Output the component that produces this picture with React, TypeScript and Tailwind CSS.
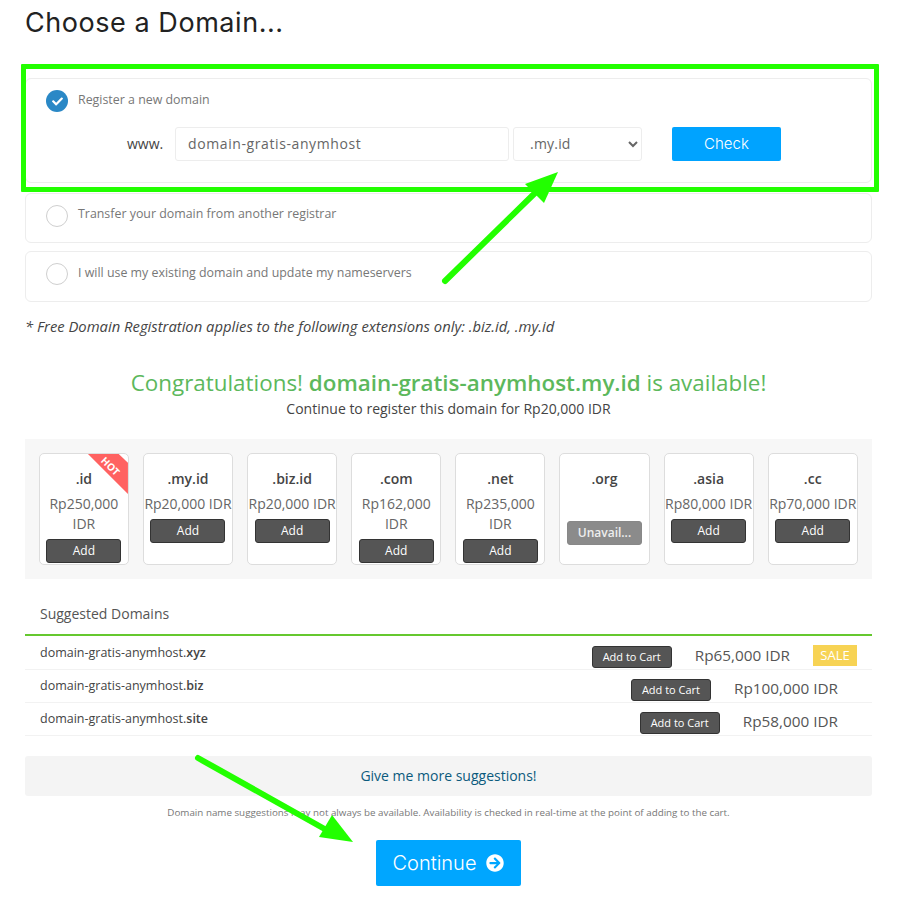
import { FaArrowCircleRight, FaCheck } from "react-icons/fa";

const tlds = [
  { t: ".id", p: "Rp250,000 IDR", hot: true },
  { t: ".my.id", p: "Rp20,000 IDR" },
  { t: ".biz.id", p: "Rp20,000 IDR" },
  { t: ".com", p: "Rp162,000 IDR" },
  { t: ".net", p: "Rp235,000 IDR" },
  { t: ".org", p: "" },
  { t: ".asia", p: "Rp80,000 IDR" },
  { t: ".cc", p: "Rp70,000 IDR" },
];

const suggestions = [
  { n: "xyz", p: "Rp65,000 IDR", sale: true },
  { n: "biz", p: "Rp100,000 IDR" },
  { n: "site", p: "Rp58,000 IDR" },
];

function Radio({ checked }: { checked?: boolean }) {
  return checked ? (
    <span className="flex h-[22px] w-[22px] shrink-0 items-center justify-center rounded-full bg-[#2a88c6] text-white">
      <FaCheck className="h-[11px] w-[11px]" />
    </span>
  ) : (
    <span className="h-[22px] w-[22px] shrink-0 rounded-full border border-[#cfcfcf] bg-white" />
  );
}

export default function App() {
  return (
    <div className="relative h-[897px] w-[906px] overflow-hidden bg-white pr-[34px] pl-[25px] font-['Open_Sans',sans-serif] text-[14px] text-[#555]">
      <h1 className="h-[46px] font-['Inter',sans-serif] text-[27px] leading-[46px] font-normal tracking-[0.55px] text-[#222]">
        Choose a Domain...
      </h1>

      <div className="mt-[32px] h-[105px] rounded-[6px] border border-[#ededed] pt-[11px] pl-[20px]">
        <div className="flex items-center gap-[10px]">
          <Radio checked />
          <span className="-mt-[2px] text-[12.4px] leading-[20px] text-[#777]">Register a new domain</span>
        </div>
        <div className="mt-[15px] flex items-center">
          <span className="-mt-[2px] ml-[81px] w-[48px] text-[14px] text-[#444]">www.</span>
          <input
            readOnly
            value="domain-gratis-anymhost"
            className="h-[34px] w-[334px] rounded-[3px] border border-[#ededed] pr-[13px] pb-[2px] pl-[12px] text-[14px] tracking-[0.6px] text-[#666] outline-none"
          />
          <select className="ml-[4px] h-[34px] w-[129px] rounded-[3px] border border-[#ededed] bg-white pb-[2px] pl-[12px] text-[14px] tracking-[0.2px] text-[#666] outline-none">
            <option>.my.id</option>
          </select>
          <button className="ml-[30px] h-[34px] w-[109px] rounded-[2px] bg-[#00a3ff] font-['Inter',sans-serif] text-[15px] font-light text-white">
            Check
          </button>
        </div>
      </div>

      <div className="mt-[10px] flex h-[50px] items-start gap-[10px] rounded-[6px] border border-[#ededed] pt-[11px] pl-[20px]">
        <Radio />
        <span className="-mt-[1px] text-[12.4px] leading-[20px] text-[#777]">Transfer your domain from another registrar</span>
      </div>
      <div className="mt-[8px] flex h-[51px] items-start gap-[10px] rounded-[6px] border border-[#ededed] pt-[11px] pl-[20px]">
        <Radio />
        <span className="text-[12.4px] leading-[20px] text-[#777]">I will use my existing domain and update my nameservers</span>
      </div>

      <p className="mt-[14px] h-[20px] text-[14.8px] leading-[20px] text-[#444] italic">
        * Free Domain Registration applies to the following extensions only: .biz.id, .my.id
      </p>

      <p className="mt-[31px] text-center text-[22.4px] leading-[32px] text-[#5cb85c]">
        Congratulations! <b className="font-semibold">domain-gratis-anymhost.my.id</b> is available!
      </p>
      <p className="text-center text-[14px] leading-[20px] text-[#444]">
        Continue to register this domain for Rp20,000 IDR
      </p>

      <div className="mt-[20px] grid h-[140px] grid-cols-8 gap-[14px] bg-[#f7f7f7] py-[14px] pr-[14.2px] pl-[13.8px]">
        {tlds.map((d) => (
          <div
            key={d.t}
            className="relative flex h-[112px] min-w-0 flex-col items-center overflow-hidden rounded-[5px] border border-[#ddd] bg-white pt-[15px] text-center"
          >
            {d.hot && (
              <span className="absolute top-0 right-0 h-[40px] w-[40px] bg-[#ff6261] [clip-path:polygon(0_0,77%_0,100%_22%,100%_100%)]">
                <span className="absolute top-[6px] left-[12px] rotate-45 text-[10px] leading-[12px] font-bold text-white">HOT</span>
              </span>
            )}
            <span className="text-[14px] leading-[20px] font-semibold text-[#444]">{d.t}</span>
            {d.p ? (
              <span className="mt-[5px] text-[14px] leading-[20px] text-[#666]">{d.p}</span>
            ) : (
              <span className="h-[27px]" />
            )}
            <button
              className={
                d.p
                  ? "mt-[5px] h-[24px] w-[75px] shrink-0 rounded-[3px] border border-[#333] bg-[#555] text-[12px] leading-[20px] text-white"
                  : "mt-[5px] h-[24px] w-[75px] shrink-0 rounded-[3px] border border-[#888] bg-[#8b8b8b] text-[12px] leading-[20px] font-semibold text-[#eee]"
              }
            >
              {d.p ? "Add" : "Unavail..."}
            </button>
          </div>
        ))}
      </div>

      <div className="mt-[25px] h-[30px] px-[15px] text-[14px] leading-[20px] text-[#555]">Suggested Domains</div>
      <div className="border-t-2 border-[#65c82f] pt-[1px]">
        {suggestions.map((s) => (
          <div key={s.n} className="flex h-[33px] border-b border-[#f2f2f2] pl-[15px]">
            <span className="mt-[6px] text-[12.5px] leading-[20px] text-[#444]">
              domain-gratis-anymhost.<b className="font-semibold">{s.n}</b>
            </span>
            <div className={s.sale ? "ml-auto flex items-start pr-[15px]" : "ml-auto flex items-start pr-[34px]"}>
              <button className="mt-[9px] h-[22px] w-[80px] rounded-[3px] border border-[#333] bg-[#555] text-[11px] leading-[20px] text-white">
                Add to Cart
              </button>
              <span className="mt-[8px] ml-[23px] text-[15.3px] leading-[20px] text-[#555]">{s.p}</span>
              {s.sale && (
                <span className="mt-[8px] ml-[23px] flex h-[21px] w-[44px] items-center justify-center bg-[#f7d354] text-[13px] text-white">SALE</span>
              )}
            </div>
          </div>
        ))}
      </div>

      <div className="mt-[20px] flex h-[40px] items-center justify-center rounded-[3px] bg-[#f4f4f4] pb-[2px] text-[14px] text-[#0b5a7d]">
        Give me more suggestions!
      </div>
      <p className="mt-[9px] text-center text-[9.8px] leading-[16px] text-[#777]">
        Domain name suggestions may not always be available. Availability is checked in real-time at the point of adding to the cart.
      </p>
      <div className="mt-[19px] flex justify-center">
        <button className="flex h-[46px] w-[145px] items-center justify-center gap-[10px] rounded-[2px] bg-[#00a6ff] font-['Inter',sans-serif] text-[20px] font-light text-white">
          Continue <FaArrowCircleRight className="h-[18px] w-[18px]" />
        </button>
      </div>

      <div className="pointer-events-none absolute top-[64px] left-[21px] h-[128px] w-[858px] rounded-[1px] border-[5px] border-[#22ff00]" />
      <svg className="pointer-events-none absolute top-0 left-0" width="906" height="897" viewBox="0 0 906 897" fill="none">
        <path d="M445 281L535 193" stroke="#22ff00" strokeWidth="6" strokeLinecap="round" />
        <polygon points="558,172 525,184 544,203" fill="#22ff00" />
        <path d="M198 758L330 832" stroke="#22ff00" strokeWidth="6" strokeLinecap="round" />
        <polygon points="353,842 319,837 332,815" fill="#22ff00" />
      </svg>
    </div>
  );
}
